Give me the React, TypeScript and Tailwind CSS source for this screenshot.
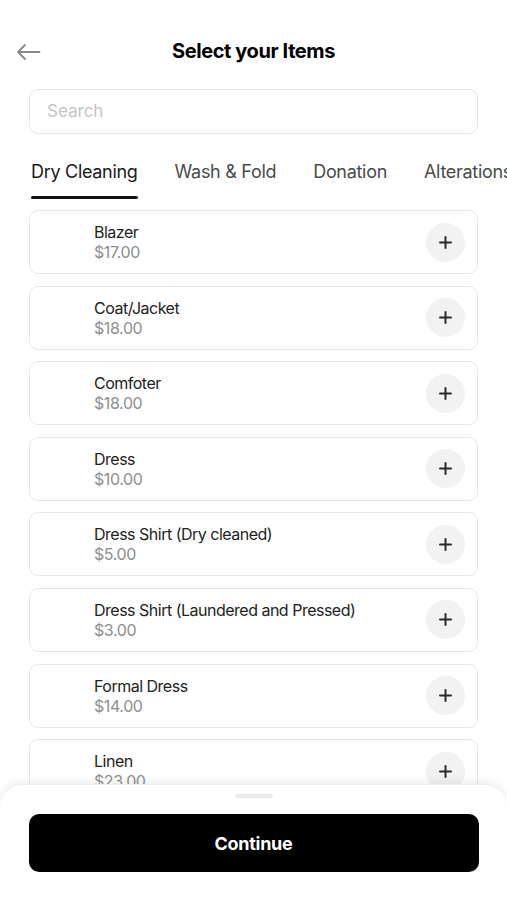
import React from "react";

const items = [
  { name: "Blazer", price: "$17.00" },
  { name: "Coat/Jacket", price: "$18.00" },
  { name: "Comfoter", price: "$18.00" },
  { name: "Dress", price: "$10.00" },
  { name: "Dress Shirt (Dry cleaned)", price: "$5.00" },
  { name: "Dress Shirt (Laundered and Pressed)", price: "$3.00" },
  { name: "Formal Dress", price: "$14.00" },
  { name: "Linen", price: "$23.00" },
  { name: "Pants", price: "$9.00" },
];

export default function App() {
  return (
    <div
      className="relative w-[507px] h-[900px] overflow-hidden bg-white"
      style={{ fontFamily: "Inter, 'Liberation Sans', sans-serif" }}
    >
      {/* header */}
      <div className="relative h-[89px] flex items-start justify-center pt-[37px]">
        <svg
          className="absolute left-[16px] top-[43px]"
          width="25"
          height="18"
          viewBox="0 0 25 18"
          fill="none"
          stroke="#8a8a8a"
          strokeWidth="1.8"
          strokeLinecap="round"
          strokeLinejoin="round"
        >
          <path d="M23.5 9H2M9 2L2 9l7 7" />
        </svg>
        <h1 className="text-[20px] font-bold text-black tracking-[-0.4px] leading-[28px]">
          Select your Items
        </h1>
      </div>

      {/* search */}
      <div className="px-[29px]">
        <div className="h-[45px] rounded-[9px] border border-[#e6e6e6] flex items-center pl-[17px]">
          <span className="text-[17px] text-[#c4c4c8]">Search</span>
        </div>
      </div>

      {/* tabs */}
      <div className="flex gap-[37px] pl-[31px] mt-[26px] whitespace-nowrap">
        <div className="flex flex-col">
          <span className="text-[18px] text-[#1a1a1a] leading-[24px] tracking-[-0.3px]">Dry Cleaning</span>
          <div className="h-[3px] bg-[#111] mt-[12px] rounded-full" />
        </div>
        <span className="text-[18px] text-[#4a4a4a] leading-[24px] tracking-[-0.3px]">Wash &amp; Fold</span>
        <span className="text-[18px] text-[#4a4a4a] leading-[24px] tracking-[-0.3px]">Donation</span>
        <span className="text-[18px] text-[#4a4a4a] leading-[24px] tracking-[-0.3px]">Alterations</span>
      </div>

      {/* list */}
      <div className="flex flex-col gap-[11.6px] px-[29px] mt-[11px]">
        {items.map((it) => (
          <div
            key={it.name}
            className="h-[64px] shrink-0 rounded-[9px] border border-[#e8e8e8] flex items-center pl-[64px] pr-[12px]"
          >
            <div className="flex-1 flex flex-col">
              <span className="text-[16px] leading-[20px] text-[#222] tracking-[-0.5px]">{it.name}</span>
              <span className="text-[16px] leading-[20px] text-[#8e8e8e] tracking-[-0.4px]">{it.price}</span>
            </div>
            <div className="w-[39px] h-[39px] rounded-full bg-[#f2f2f2] flex items-center justify-center">
              <svg width="13" height="13" viewBox="0 0 13 13" stroke="#2a2a2a" strokeWidth="2" strokeLinecap="round">
                <path d="M6.5 1v11M1 6.5h11" />
              </svg>
            </div>
          </div>
        ))}
      </div>

      {/* bottom sheet */}
      <div className="absolute left-0 right-0 bottom-0 h-[116px] bg-white rounded-t-[22px] shadow-[0_-2px_8px_rgba(0,0,0,0.08)] border-t border-[#eeeeee] flex flex-col items-center">
        <div className="w-[38px] h-[4px] rounded-full bg-[#ececec] mt-[9px]" />
        <div className="w-[450px] h-[58px] mt-[16px] rounded-[10px] bg-black flex items-center justify-center">
          <span className="text-white text-[18px] font-bold tracking-[-0.3px]">Continue</span>
        </div>
      </div>
    </div>
  );
}
